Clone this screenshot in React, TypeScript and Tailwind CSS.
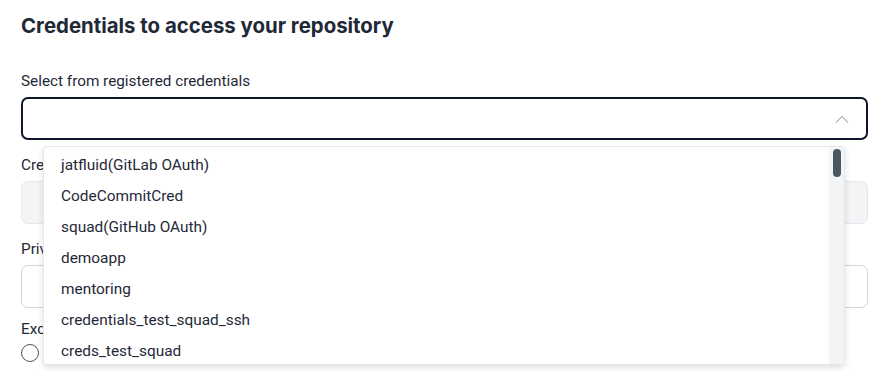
import React from 'react';

const OPTIONS = [
  'jatfluid(GitLab OAuth)',
  'CodeCommitCred',
  'squad(GitHub OAuth)',
  'demoapp',
  'mentoring',
  'credentials_test_squad_ssh',
  'creds_test_squad',
];

const ChevronUp: React.FC = () => (
  <svg width="14" height="8" viewBox="0 0 14 8" fill="none" className="shrink-0">
    <polyline points="1,7.5 7,1.5 13,7.5" stroke="#b4b8bf" strokeWidth="1.1" strokeLinejoin="round" />
  </svg>
);

const App: React.FC = () => {
  return (
    <div className="min-h-[371px] bg-white px-[21px] pt-[12px] font-['Roboto','Liberation_Sans',sans-serif] text-[#1f2937]">
      <h2 className="text-[20.4px] leading-[28px] font-bold text-[#1f2937] font-['Inter','Roboto',sans-serif]">
        Credentials to access your repository
      </h2>

      <div className="mt-[31px] flex flex-col gap-[15px]">
        {/* select with open menu */}
        <div className="relative flex flex-col gap-[6px]">
          <label className="text-[15.3px] leading-5 text-[#1f2937]">Select from registered credentials</label>
          <button className="flex h-[43px] w-full items-center justify-end rounded-[7px] border-2 border-[#0f172a] bg-white pr-[17px]">
            <ChevronUp />
          </button>

          <div className="absolute left-[22px] top-[75px] z-10 flex h-[219px] w-[802px] overflow-hidden rounded-[4px] border border-[#e5e7eb] bg-white shadow-[0_3px_6px_rgba(0,0,0,0.12)]">
            <ul className="flex-1 pt-[3px]">
              {OPTIONS.map((opt) => (
                <li key={opt} className="flex h-[31px] items-center pl-[17px] text-[15.4px] text-[#1f2937]">
                  {opt}
                </li>
              ))}
            </ul>
            <div className="flex w-[15px] justify-center bg-[#f3f4f6] pt-[2px]">
              <div className="h-[28px] w-[8px] rounded-full bg-[#4b5563]" />
            </div>
          </div>
        </div>

        <div className="flex flex-col gap-[6px]">
          <label className="text-[15.3px] leading-5">Credential name</label>
          <input
            disabled
            className="h-[43px] w-full rounded-[7px] border border-[#e5e7eb] bg-[#f3f4f6]"
          />
        </div>

        <div className="flex flex-col gap-[6px]">
          <label className="text-[15.3px] leading-5">Private key</label>
          <input className="h-[43px] w-full rounded-[7px] border border-[#d1d5db] bg-white" />
        </div>

        <div className="-mt-[4px] flex flex-col gap-[5px]">
          <label className="text-[15.3px] leading-5">Exclusive</label>
          <div className="flex items-center">
            <span className="h-[18px] w-[18px] rounded-full border border-[#4b5563]" />
          </div>
        </div>
      </div>
    </div>
  );
};

export default App;
